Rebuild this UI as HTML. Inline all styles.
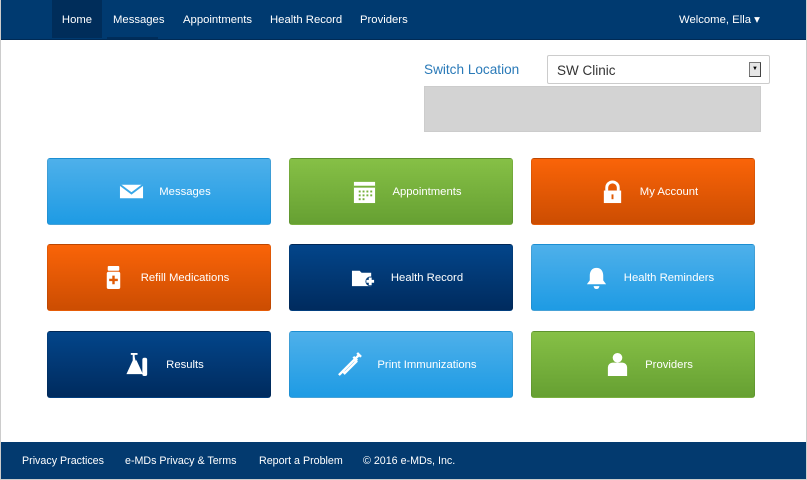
<!DOCTYPE html>
<html><head><style>
*{box-sizing:border-box;margin:0;padding:0}
body{width:807px;height:480px;background:#fff;font-family:"Liberation Sans",Arial,sans-serif;position:relative;overflow:hidden}
.bl{position:absolute;left:0;top:0;width:1px;height:480px;background:#ccc}
.br{position:absolute;right:0;top:0;width:1px;height:480px;background:#ccc}
.bb{position:absolute;left:0;bottom:0;width:807px;height:1px;background:#ccc}
.nav{position:absolute;left:0;top:0;width:807px;height:40px;background:#003a70;border-bottom:1px solid #002a55}
.nav a{position:absolute;top:0;height:38px;line-height:40px;color:#fff;font-size:11.3px;text-decoration:none}
.home{background:#002d5a;left:52px;width:50px;text-align:center}
.under{position:absolute;left:107px;top:37px;width:51px;height:2px;background:#002d5a}
.sl{position:absolute;left:424px;top:62px;color:#2a7ab8;font-size:13.6px}
.sel{position:absolute;left:547px;top:55px;width:223px;height:29px;border:1px solid #ccc;border-radius:2px;font-size:13.5px;padding:7px 9px;color:#333}
.arr{position:absolute;left:201px;top:6px;width:12px;height:15px;background:#e6e6e6;border:1px solid #777;border-right-color:#444;border-bottom-color:#444;font-size:6px;line-height:13px;text-align:center;color:#000}
.gray{position:absolute;left:424px;top:86px;width:337px;height:46px;background:#d3d3d3;border:1px solid #ccc}
.t{position:absolute;width:224px;height:67px;border-radius:3px;color:#fff;font-size:11.3px;display:flex;align-items:center;justify-content:center;gap:15px;border:1px solid rgba(0,0,0,.08)}
.t svg{width:25px;height:25px}
.blue{background:linear-gradient(#4eb0ea,#1e9be4)}
.green{background:linear-gradient(#86c046,#66a032)}
.orange{background:linear-gradient(#fa6408,#cc4d02)}
.navy{background:linear-gradient(#03458a,#002b5e)}
.foot{position:absolute;left:0;top:442px;width:807px;height:37px;background:#033a6f}
.foot span{position:absolute;top:13px;color:#fff;font-size:10.7px}
</style></head><body>
<div class="nav">
<a class="home">Home</a>
<a style="left:113px">Messages</a>
<a style="left:183px">Appointments</a>
<a style="left:270px">Health Record</a>
<a style="left:360px">Providers</a>
<a style="left:679px">Welcome, Ella ▾</a>
<div class="under"></div>
</div>
<div class="sl">Switch Location</div>
<div class="sel">SW Clinic<div class="arr">▼</div></div>
<div class="gray"></div>

<div class="t blue" style="left:47px;top:158px;padding-left:12px"><svg viewBox="0 0 26 26"><path d="M1 6h24v14H1z" fill="#fff"/><path d="M1 6l12 9 12-9" fill="none" stroke="#3aa8e8" stroke-width="2"/></svg>Messages</div>
<div class="t green" style="left:289px;top:158px;padding-left:12px"><svg viewBox="0 0 26 26"><rect x="2" y="3" width="22" height="22" fill="#fff"/><g fill="#76b03c"><rect x="2" y="7" width="22" height="2"/><rect x="7" y="12" width="2" height="2"/><rect x="11" y="12" width="2" height="2"/><rect x="15" y="12" width="2" height="2"/><rect x="19" y="12" width="2" height="2"/><rect x="7" y="16" width="2" height="2"/><rect x="11" y="16" width="2" height="2"/><rect x="15" y="16" width="2" height="2"/><rect x="19" y="16" width="2" height="2"/><rect x="7" y="20" width="2" height="2"/><rect x="11" y="20" width="2" height="2"/></g></svg>Appointments</div>
<div class="t orange" style="left:531px;top:158px;padding-left:12px"><svg viewBox="0 0 26 26"><path d="M7 12V9a6 6 0 0112 0v3" fill="none" stroke="#fff" stroke-width="3"/><rect x="4" y="12" width="18" height="13" fill="#fff"/><rect x="12" y="16" width="2" height="5" fill="#e05a05"/></svg>My Account</div>

<div class="t orange" style="left:47px;top:244px;padding-left:12px"><svg viewBox="0 0 26 26"><rect x="7" y="1" width="12" height="5" rx="1" fill="#fff"/><rect x="6" y="7" width="14" height="18" rx="2" fill="#fff"/><path d="M13 11v9M8.5 15.5h9" stroke="#e05a05" stroke-width="2.5"/></svg>Refill Medications</div>
<div class="t navy" style="left:289px;top:244px;padding-left:12px"><svg viewBox="0 0 26 26"><path d="M1 6h8l2 2h10v14H1z" fill="#fff"/><circle cx="20" cy="17" r="5" fill="#013a76"/><path d="M20 13v8M16 17h8" stroke="#fff" stroke-width="3"/></svg>Health Record</div>
<div class="t blue" style="left:531px;top:244px;padding-left:12px"><svg viewBox="0 0 26 26"><path d="M13 3c5 0 7 4 7 8v5l3 4H3l3-4v-5c0-4 2-8 7-8z" fill="#fff"/><path d="M10 22h6a3 3 0 01-6 0z" fill="#fff"/></svg>Health Reminders</div>

<div class="t navy" style="left:47px;top:331px;padding-left:12px"><svg viewBox="0 0 26 26"><path d="M5 2h7M8 2v7L2 22h14L10 9" fill="#fff" stroke="#fff" stroke-width="2"/><rect x="17" y="6" width="5" height="19" rx="2" fill="#fff"/></svg>Results</div>
<div class="t blue" style="left:289px;top:331px;padding-left:12px"><svg viewBox="0 0 26 26"><path d="M2 24l5-5M6 20l12-12 2 2-12 12zM17 5l4 4M21 1l4 4M23 3l-4 4" stroke="#fff" stroke-width="2.5" fill="none"/></svg>Print Immunizations</div>
<div class="t green" style="left:531px;top:331px;padding-left:12px"><svg viewBox="0 0 26 26"><circle cx="13" cy="6" r="5" fill="#fff"/><path d="M3 25v-9a5 5 0 015-5h10a5 5 0 015 5v9z" fill="#fff"/></svg>Providers</div>

<div class="foot">
<span style="left:22px">Privacy Practices</span>
<span style="left:125px">e-MDs Privacy &amp; Terms</span>
<span style="left:259px">Report a Problem</span>
<span style="left:363px">© 2016 e-MDs, Inc.</span>
</div>
<div class="bl"></div><div class="br"></div><div class="bb"></div>
</body></html>
